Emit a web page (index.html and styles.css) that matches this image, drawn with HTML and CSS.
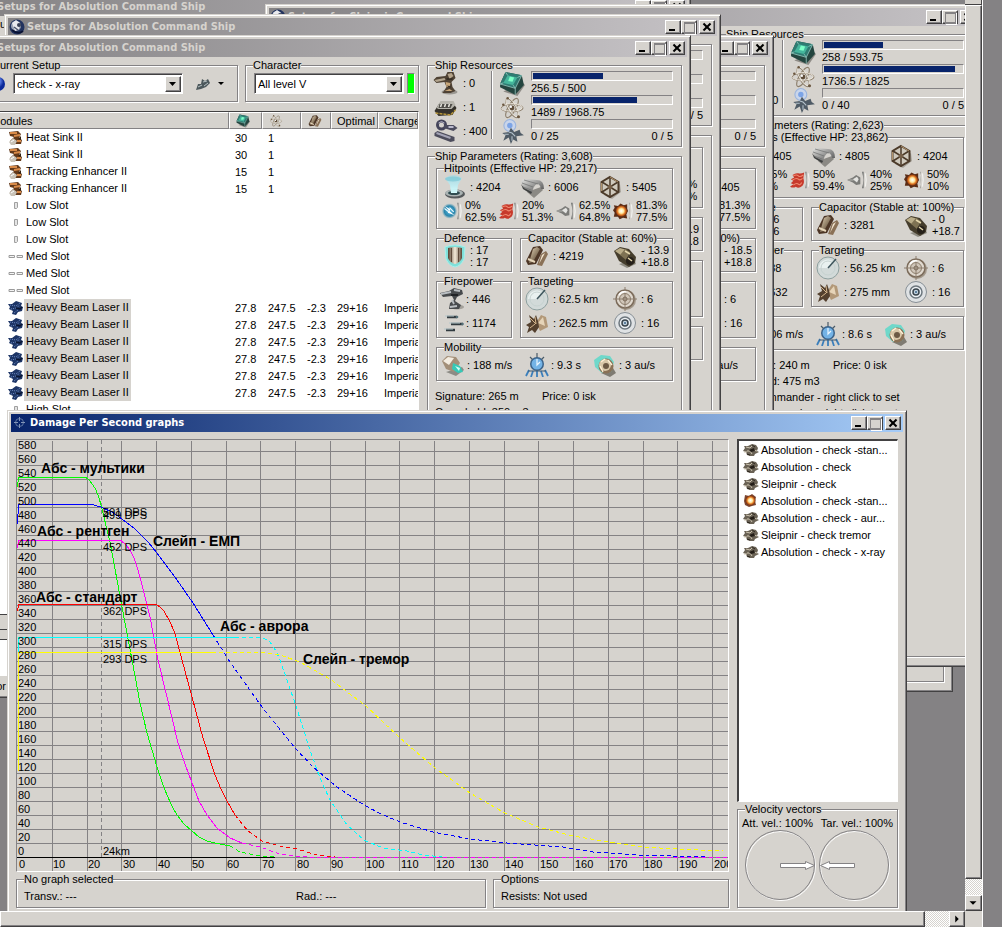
FILE: index.html
```html
<!DOCTYPE html>
<html lang="en">
<head>
    <meta charset="UTF-8">
    <meta name="viewport" content="width=device-width, initial-scale=1.0">
    <title>Damage Per Second graphs</title>
    <link rel="stylesheet" href="styles.css">
</head>
<body>
    <!-- Icon sprite -->
    <svg class="sprite" width="0" height="0" aria-hidden="true">
        <defs>
            <linearGradient id="gMetal" x1="0" y1="0" x2="1" y2="1"><stop offset="0" stop-color="#e4e4e2"/><stop offset="1" stop-color="#4a4a4a"/></linearGradient>
            <linearGradient id="gBronze" x1="0" y1="0" x2="1" y2="1"><stop offset="0" stop-color="#e9d9bc"/><stop offset="1" stop-color="#43301c"/></linearGradient>
            <linearGradient id="gPlate" x1="0" y1="0" x2="1" y2="0"><stop offset="0" stop-color="#54402f"/><stop offset=".5" stop-color="#f4ead8"/><stop offset="1" stop-color="#5b4636"/></linearGradient>
            <linearGradient id="gBeam" x1="0" y1="0" x2="0" y2="1"><stop offset="0" stop-color="#8fdcee" stop-opacity=".5"/><stop offset="1" stop-color="#d8ffff"/></linearGradient>
            <radialGradient id="gBlast"><stop offset="0" stop-color="#ffffff"/><stop offset=".4" stop-color="#ffe9a0"/><stop offset=".7" stop-color="#e07420"/><stop offset="1" stop-color="#6b2b10"/></radialGradient>
            <radialGradient id="gEm"><stop offset="0" stop-color="#58b8e0"/><stop offset=".7" stop-color="#2b86ac"/><stop offset="1" stop-color="#88b5c4" stop-opacity=".3"/></radialGradient>
            <radialGradient id="gBall" cx=".4" cy=".3"><stop offset="0" stop-color="#ffffff"/><stop offset=".4" stop-color="#6a8cf0"/><stop offset="1" stop-color="#0c2a9a"/></radialGradient>
        </defs>
        <symbol id="turret" viewBox="0 0 24 24">
            <ellipse cx="16" cy="21" rx="8" ry="2.500" fill="#9b9892"/>
            <path d="M0 9l3-3 9-1 2-4 6 0 2 6-4 4 1 5 3 4-5 2H9l4-6-2-5-8 1z" fill="#4f4234"/>
            <path d="M1 9l10-2 1 2-9 2z" fill="#b3a58e"/><path d="M14 3l4-1 2 3-4 3z" fill="#b5a48b"/>
            <path d="M12 11l5 1-1 4-3 0zM11 20l5-2 3 2z" fill="#c8a77a"/>
            <path d="M13 8l6 0M14 15l3 1" stroke="#201a14" fill="none"/>
        </symbol>
        <symbol id="launcher" viewBox="0 0 24 24">
            <path d="M1 16l5-8 13-1 4 6-4 7-14 1z" fill="#35322c"/>
            <path d="M3 13l4-7 13 0 2 4-4 4H5z" fill="#b7b5ad"/>
            <path d="M6 9h13l-2 4H5z" fill="#4f4d48"/>
            <path d="M8 9l-1 3M12 9l-1 3M16 9l-1 3" stroke="#e8e6df" stroke-width="1.500"/>
            <path d="M2 18l15 2 5-5" stroke="#b7963a" stroke-width="1.500" fill="none" stroke-dasharray="3 1"/>
        </symbol>
        <symbol id="calib" viewBox="0 0 24 24">
            <path d="M1 14l3-2 17 6v4l-4 1L1 17z" fill="#4d4d5c"/>
            <path d="M3 14l14 5" stroke="#a4a4b6" stroke-width="2"/>
            <circle cx="8" cy="6" r="4" fill="none" stroke="#45455a" stroke-width="3"/>
            <path d="M5 4q3-3 6 0" stroke="#a9a9bf" fill="none"/>
            <path d="M11 6l9 0 4 3-4 3-10-3z" fill="#4b4b5e"/><path d="M15 8h5" stroke="#b9b9cc" stroke-width="2"/>
        </symbol>
        <symbol id="cpu" viewBox="0 0 24 24">
            <path d="M4 19l13 4 7-10-3-3z" fill="#8f8c87"/>
            <path d="M6 1l15 3 2 9-8 9L1 15v-3z" fill="#24453f"/>
            <path d="M6 1l15 3-6 12L1 12z" fill="#2f7c72"/>
            <path d="M8 4l9 2-4 7-9-2z" fill="#45b59c"/>
            <path d="M10 5l4 1-1.500 4-4-.7z" fill="#7dffc7"/>
            <path d="M1 12l14 4 6-12M15 16v6M6 1l2 3M1 12l3-1M15 16l-2-3M21 4l-4 2" stroke="#9ccdc3" stroke-width=".7" fill="none"/>
        </symbol>
        <symbol id="grid" viewBox="0 0 24 24">
            <g fill="none" stroke="#8b7d6a" stroke-width="1"><ellipse cx="12" cy="12" rx="10" ry="3.500"/><ellipse cx="12" cy="12" rx="10" ry="3.500" transform="rotate(60 12 12)"/><ellipse cx="12" cy="12" rx="10" ry="3.500" transform="rotate(120 12 12)"/></g>
            <g fill="none" stroke="#f6f1e6" stroke-width=".7"><ellipse cx="11.500" cy="11.500" rx="10" ry="3.500"/><ellipse cx="11.500" cy="11.500" rx="10" ry="3.500" transform="rotate(60 12 12)"/></g>
            <circle cx="12" cy="12" r="2.200" fill="#5e4c38"/><circle cx="11" cy="11" r="1" fill="#fff"/>
            <circle cx="4" cy="9" r="1.200" fill="#6b5740"/><circle cx="18" cy="20" r="1.400" fill="#6b5740"/><circle cx="8" cy="3" r="1.200" fill="#6b5740"/>
        </symbol>
        <symbol id="drone" viewBox="0 0 24 24">
            <circle cx="10" cy="6" r="5.500" fill="#c9d5ea" stroke="#9ab4dd"/><circle cx="10" cy="6" r="2.500" fill="#7ca4e6"/>
            <path d="M3 13l6-1 2-4 3 4 5-2 1 3 3 2-7 1 1 5-4-2-2 4-2-6-5 3 2-5z" fill="#4f5b66"/>
            <path d="M9 12l3 1 3 3M5 14l4 0M12 16v4" stroke="#b4c2cc" stroke-width="1" fill="none"/>
        </symbol>
        <symbol id="shield" viewBox="0 0 24 24">
            <ellipse cx="13" cy="19" rx="10" ry="4.500" fill="#55595b"/>
            <ellipse cx="12" cy="18" rx="9" ry="3.500" fill="#aab3b3"/>
            <ellipse cx="12" cy="18" rx="6" ry="2" fill="#2f4c50"/>
            <path d="M3 3q9-6 17 0l-4 7-1 8H9L8 10z" fill="url(#gBeam)"/>
            <ellipse cx="11" cy="4" rx="8" ry="2.500" fill="#6fc4d6" opacity=".6"/>
        </symbol>
        <symbol id="armor" viewBox="0 0 24 24">
            <path d="M7 17l7 6 9-8-2-3z" fill="#8b8984"/>
            <path d="M1 7q1-3 4-3l12 1q7 0 7 9l-3 0q-1-5-4-5-4 2-5 9l-8-4z" fill="url(#gMetal)"/>
            <path d="M4 5l14 4M2 8l11 4M3 12l8 3" stroke="#6d6f6f" stroke-width=".7"/>
            <path d="M1 9l2 5 8 5 1-2-8-4z" fill="#3f4141"/>
        </symbol>
        <symbol id="hull" viewBox="0 0 24 24">
            <path d="M6 20l8 4 9-7-1-8z" fill="#a7a39b"/>
            <path d="M12 2l8.500 5v10L12 22l-8.500-5V7z" fill="#cfc9bd" stroke="#4c3a29" stroke-width="2"/>
            <path d="M12 3v18M4 7l16 10M20 7L4 17" stroke="#4a3928" stroke-width="1.500"/>
            <path d="M12 2l8 5M3.500 8v8" stroke="#c9a87c" stroke-width=".8"/><circle cx="12" cy="12" r="2.300" fill="#766049"/>
        </symbol>
        <symbol id="em" viewBox="0 0 24 24">
            <circle cx="9" cy="12" r="9" fill="url(#gEm)"/>
            <path d="M3 6l7 4-1 2 6 5-8-3 1-3z" fill="#fff"/><path d="M3 9l5 4M9 8l5 5" stroke="#e8faff" stroke-width="1.500"/>
            <path d="M18 2h2v20h-2q3-10 0-20z" fill="#8f908d"/><path d="M22 4q2 8 0 16" stroke="#f1f1ee" stroke-width="1.500" fill="none"/>
        </symbol>
        <symbol id="thermal" viewBox="0 0 24 24">
            <path d="M3 6q4-3 7-2 3 1 7-1l-1 7q2 5-1 9-5 4-8 1-3 2-7 0l4-3-3-1 3-3-3-2 4-2z" fill="#c73a2c"/>
            <path d="M4 7q4-2 6 0t6-1M3 12q5-3 7-1t5-1M4 18q4-3 6-1t4-2" stroke="#f08a70" stroke-width="1.300" fill="none"/>
            <path d="M18 2h2v20h-2q3-10 0-20z" fill="#8f908d"/><path d="M22 4q2 8 0 16" stroke="#f1f1ee" stroke-width="1.500" fill="none"/>
        </symbol>
        <symbol id="kinetic" viewBox="0 0 24 24">
            <path d="M0 12l7-3 4-3 5 3v8l-5 1-4-3z" fill="#7b7b78"/>
            <path d="M7 11l5-3 2 3-2 4z" fill="#e4e4e1"/><path d="M2 12h6" stroke="#bdbdb9"/>
            <path d="M18 2h2v20h-2q3-10 0-20z" fill="#6f716f"/><path d="M22 4q2 8 0 16" stroke="#f1f1ee" stroke-width="1.500" fill="none"/>
        </symbol>
        <symbol id="explosive" viewBox="0 0 24 24">
            <path d="M1 5l5 1 3-3 4 2 4-1v5l1 3-2 4 1 5-5-1-4 2-2-3-5 0 1-5-2-3 2-3z" fill="#5a2c16"/>
            <circle cx="10" cy="12" r="7" fill="url(#gBlast)"/>
            <path d="M19 2h1v20h-1q3-10 0-20z" fill="#8f908d"/><path d="M22 4q2 8 0 16" stroke="#f1f1ee" stroke-width="1.500" fill="none"/>
        </symbol>
        <symbol id="defence" viewBox="0 0 24 24">
            <path d="M2 3q10-4 20 0l-1 12q-3 7-9 8-6-1-9-8z" fill="#7fe0da" stroke="#a9efeb"/>
            <path d="M5 4q7-2 14 0v10q-2 5-7 6-5-1-7-6z" fill="url(#gPlate)"/>
            <path d="M8.500 4v14M15.500 4v14" stroke="#5e4a3a"/>
        </symbol>
        <symbol id="cap" viewBox="0 0 24 24">
            <path d="M8 3l7-1 3 4-7 14-8 1-2-4z" fill="#4d3626"/><path d="M8 5l4-2 3 2-7 13-4 1z" fill="url(#gBronze)"/>
            <path d="M16 10l5-3 2 3-6 12-5-1z" fill="#8a7157"/><path d="M17 11l3-2-6 11z" fill="#f2e5cf"/>
            <path d="M3 15l7 3" stroke="#e7d7bb" stroke-width="2"/>
        </symbol>
        <symbol id="recharge" viewBox="0 0 24 24">
            <path d="M6 20l8 4 9-4-2-4z" fill="#8f8c82"/>
            <path d="M1 7l6-4 9 2 7 8-1 6-6 4-10-6z" fill="#453d2c"/><path d="M2 7l5-3 7 2-5 6z" fill="#b9ac88"/>
            <path d="M7 11l5-6 5 3-4 8z" fill="#7e7253"/><circle cx="17" cy="17" r="4" fill="#262019"/><path d="M12 7l5 3M15 14l4 3" stroke="#e4d6ac" stroke-width="1.500"/>
        </symbol>
        <symbol id="gun" viewBox="0 0 24 24">
            <ellipse cx="17" cy="20" rx="7" ry="2.500" fill="#a3a09a"/>
            <path d="M0 6l9-2 5-3 8 2 1 4-6 3-2 4 6 4-2 4-10 0 1-6 4-3-2-4-9 1z" fill="#474a4d"/>
            <path d="M1 7l10-2M14 3l6 1M12 13l2 4M10 20l7-1" stroke="#b9bec2" stroke-width="1.800"/><path d="M11 8l7 0" stroke="#15171a" stroke-width="1.500"/>
        </symbol>
        <symbol id="volley" viewBox="0 0 24 24">
            <path d="M7 6h10M11 13h12M6 19h9" stroke="#313a3f" stroke-width="2.400"/>
            <path d="M5 5h9M9 12h11M4 18h9" stroke="#b4c6ca" stroke-width="1"/><circle cx="17" cy="6" r="1.300" fill="#557078"/><circle cx="22.500" cy="13" r="1.300" fill="#557078"/>
        </symbol>
        <symbol id="radar" viewBox="0 0 24 24">
            <circle cx="12" cy="12" r="11" fill="#d2dad9" stroke="#8ea09f" stroke-width="1"/>
            <path d="M3 12a9 9 0 0 1 14-7L12 12z" fill="#e9f1f0"/><circle cx="12" cy="12" r="7" fill="none" stroke="#c6d2d0"/>
            <path d="M12 12l8-9" stroke="#3e555c" stroke-width="1.500"/>
        </symbol>
        <symbol id="locks" viewBox="0 0 24 24">
            <circle cx="13" cy="13" r="10" fill="#a59b8e"/><circle cx="12" cy="12" r="9" fill="#e0d9cf" stroke="#7c6c5b" stroke-width="1.500"/>
            <circle cx="12" cy="12" r="5.500" fill="#cfc5b8" stroke="#8b7c6b"/><path d="M12 0v24M0 12h24" stroke="#8d7e6e"/><circle cx="12" cy="12" r="2" fill="none" stroke="#7a6a59"/>
            <path d="M6 8a7 7 0 0 1 7-3" stroke="#fff" stroke-width="1.500" fill="none"/>
        </symbol>
        <symbol id="dish" viewBox="0 0 24 24">
            <path d="M11 12l5-8 5 2 2 10-8 4z" fill="#b29878"/><path d="M13 12l5-6 2 9z" fill="#e6d4b8"/>
            <path d="M4 4l5 4 2-4 2 6 1 6-4 6-3-3-5 3 2-6-3-2 5-3z" fill="#54402e"/>
            <path d="M5 7l6 6M5 17l5-4M10 6l1 7" stroke="#d5b68d" stroke-width="1"/>
        </symbol>
        <symbol id="scan" viewBox="0 0 24 24">
            <circle cx="12" cy="12" r="10.500" fill="#dfe2e4" stroke="#878f95"/><circle cx="12" cy="12" r="6" fill="#edf1f4" stroke="#6d777e" stroke-width="1.500"/>
            <circle cx="12" cy="12" r="3" fill="#c2d2de" stroke="#39444c" stroke-width="1.500"/><circle cx="12" cy="12" r="1" fill="#3d6688"/>
        </symbol>
        <symbol id="speed" viewBox="0 0 24 24">
            <path d="M5 19l10 4 8-6-2-3z" fill="#8d8b85"/>
            <path d="M1 8l5-5 9 1 4 6-6 9-8-3z" fill="#a38f78"/><path d="M2 8l5-4 6 1-5 7z" fill="#f3ece0"/>
            <path d="M12 10l7 3 3 6-5 1-6-4z" fill="#36c9b7"/><path d="M14 13l5 2-1 3z" fill="#d1fff6"/>
        </symbol>
        <symbol id="align" viewBox="0 0 24 24">
            <path d="M12 0v5M5 4l3 3M19 4l-3 3" stroke="#4b5b68" stroke-width="1.200"/>
            <circle cx="12" cy="11" r="7" fill="#3c6389"/><circle cx="12" cy="11" r="5.500" fill="#74b3e6"/><path d="M12 6v6l3-3" stroke="#eaf6ff" stroke-width="1.200" fill="none"/>
            <path d="M4 17l-3 6M8 18l-2 6M12 18v6M16 18l2 6M20 17l3 6" stroke="#3b7fbc" stroke-width="1.800"/><path d="M3 18h18" stroke="#3f5a72"/>
        </symbol>
        <symbol id="warp" viewBox="0 0 24 24">
            <path d="M8 20l9 4 6-4-3-5z" fill="#7f7b72"/>
            <path d="M1 7l7-5 9 1 4 6-3 10-9 1-7-6z" fill="#6fd8ca"/><circle cx="13" cy="13" r="7.500" fill="#8a7156"/><circle cx="12" cy="12" r="6" fill="#d9c7a8"/>
            <circle cx="13" cy="13" r="3" fill="#6d5a45"/><path d="M8 9l4-3M7 13l3 6M15 7l4 5" stroke="#fff1d7" stroke-width="1.300"/>
        </symbol>
        <symbol id="lowmod" viewBox="0 0 16 16">
            <path d="M1 2l9-1 3 3-2 4 3 2-1 4-8 0-3-3 4-4-4-1z" fill="#63391a"/><path d="M2 3l7 0M6 6l6-1M9 11l4 0" stroke="#d88a48" stroke-width="2"/>
            <path d="M1 12l4-4 4 3-2 4H3z" fill="#c9c3b8"/><path d="M3 12l3-2" stroke="#fff"/><path d="M10 9l3-3v4z" fill="#33200f"/>
        </symbol>
        <symbol id="lowslot" viewBox="0 0 16 16"><path d="M6.500 4.500h3v5l-1 1h-2z" fill="#e4e4e4" stroke="#a0a0a0"/></symbol>
        <symbol id="medslot" viewBox="0 0 16 16"><path d="M1 6.500h5.500v2H1zM9 6.500h5.500v2H9z" fill="#f4f4f4" stroke="#9a9a9a"/></symbol>
        <symbol id="laser" viewBox="0 0 16 16">
            <path d="M0 4l4 0 4-3 6 2-1 3 2 1-1 4-4 1-2 3-4-1 1-3-4-2 1-2z" fill="#1d3566"/>
            <path d="M2 5l6 1 4-3M3 9l5-1 4-3M6 13l4-3" stroke="#6e8cc4" stroke-width="1" stroke-dasharray="1 1" fill="none"/><path d="M8 8l4 1 2-2" stroke="#0a1530" stroke-width="1.500" fill="none"/>
        </symbol>
        <symbol id="fit" viewBox="0 0 16 16">
            <path d="M1 4l4 0 4-2 4 1 2 3-1 3 2 1-4 2-1 2-4 0-3-1-1-3-3-1 2-3z" fill="#6a6255"/>
            <path d="M3 5l4 1 3-3M4 9l3 0 2 3M10 8l4 1M1 10h3" stroke="#cfc6b2" fill="none"/><path d="M6 8l5-2 1 3-4 1z" fill="#241e18"/><path d="M9 3l3 2M4 12l3 1" stroke="#2b251d"/>
        </symbol>
        <symbol id="blast" viewBox="0 0 16 16"><path d="M2 2l4 1 3-2 4 3-1 4 1 4-4 1-3 1-4-2-1-4z" fill="#7c4630"/><circle cx="7.500" cy="7.500" r="5" fill="url(#gBlast)"/></symbol>
        <symbol id="ship" viewBox="0 0 16 16"><circle cx="8" cy="8" r="7.500" fill="#22335f"/><circle cx="7" cy="7" r="5" fill="#9aa3b5"/><path d="M3 4l4-3 4 3-1 6-4 2z" fill="#e9eaee"/><path d="M3 11q6 5 11 1" stroke="#0a1233" stroke-width="2" fill="none"/><path d="M5 8l4 3" stroke="#4c546b" stroke-width="1.500"/><circle cx="10" cy="6" r="2" fill="#383f55"/></symbol>
        <symbol id="cross" viewBox="0 0 16 16"><circle cx="7.500" cy="7.500" r="4" fill="none" stroke="#5f76a2"/><path d="M7.500 2v4M7.500 9v4M2 7.500h4M9 7.500h4" stroke="#8194b8"/></symbol>
        <symbol id="pod" viewBox="0 0 16 16"><path d="M1 14l2-6 3 0 1-5 3 2 3-2 2 4-4 4-5 2z" fill="#4d585c"/><path d="M3 11l4-2M8 6l4-1M9 10l4-3" stroke="#b5c0c2"/></symbol>
        <symbol id="ball" viewBox="0 0 16 16"><circle cx="8" cy="8" r="7" fill="url(#gBall)"/></symbol>
        <symbol id="tick" viewBox="0 0 8 8"><path d="M0 4l3 3 4-6" stroke="#6cc03c" stroke-width="2" fill="none"/></symbol>
    </svg>

    <div class="desktop">
        <main class="workspace" id="workspace">
            <!-- DPS graph window -->
            <section class="window graph-window">
                <header class="titlebar active">
                    <svg class="title-icon"><use href="#cross"/></svg>
                    <h1>Damage Per Second graphs</h1>
                    <div class="title-buttons">
                        <button class="tb min" aria-label="Minimize"></button><button class="tb max" aria-label="Maximize"></button><button class="tb close" aria-label="Close"></button>
                    </div>
                </header>
                <div class="graph-body">
                    <div class="graph-left">
                        <div class="graph-panel"><svg id="graph" class="graph" viewBox="17 440 711 431"></svg></div>
                        <div class="graph-info">
                            <fieldset class="selected-info">
                                <legend>No graph selected</legend>
                                <div class="info-line"><span>Transv.: ---</span><span>Rad.: ---</span></div>
                            </fieldset>
                            <fieldset class="options-info">
                                <legend>Options</legend>
                                <div class="info-line"><span>Resists: Not used</span></div>
                            </fieldset>
                        </div>
                    </div>
                    <div class="graph-right">
                        <ul class="fit-list">
                            <li><svg><use href="#fit"/></svg>Absolution - check -stan...</li>
                            <li><svg><use href="#fit"/></svg>Absolution - check</li>
                            <li><svg><use href="#fit"/></svg>Sleipnir - check</li>
                            <li><svg><use href="#blast"/></svg>Absolution - check -stan...</li>
                            <li><svg><use href="#fit"/></svg>Absolution - check - aur...</li>
                            <li><svg><use href="#fit"/></svg>Sleipnir - check tremor</li>
                            <li><svg><use href="#fit"/></svg>Absolution - check - x-ray</li>
                        </ul>
                        <fieldset class="velocity">
                            <legend>Velocity vectors</legend>
                            <div class="velocity-labels"><span>Att. vel.: 100%</span><span>Tar. vel.: 100%</span></div>
                            <svg class="vectors" viewBox="0 0 148 72">
                                <g fill="none" stroke="#fff"><circle cx="37" cy="36" r="34.500"/><circle cx="111" cy="36" r="34.500"/></g>
                                <g fill="none" stroke="#848284"><circle cx="36" cy="35" r="34.500"/><circle cx="110" cy="35" r="34.500"/></g>
                                <path d="M36.500 33.500h25v-2l9 4-9 4v-2h-25zM110.500 33.500h-25v-2l-9 4 9 4v-2h25z" fill="#fff" stroke="#848284"/>
                            </svg>
                        </fieldset>
                    </div>
                </div>
            </section>
        </main>
        <div class="vscroll">
            <div class="scroll-up"></div>
            <div class="thumb"></div>
            <div class="track"></div>
            <button class="scroll-button" aria-label="Scroll down"><svg viewBox="0 0 16 16"><path d="M4 6h8l-4 4z"/></svg></button>
        </div>
        <div class="outside"></div>
        <div class="hscroll">
            <div class="thumb"></div>
            <div class="track"></div>
            <button class="scroll-button" aria-label="Scroll right"><svg viewBox="0 0 16 16"><path d="M6 4v8l4-4z"/></svg></button>
        </div>
        <div class="corner"></div>
    </div>

    <script src="script.js"></script>
</body>
</html>
```

FILE: styles.css
```css
/* Global Styles */
* {
    box-sizing: border-box;
}

body {
    margin: 0;
    font-family: 'Liberation Sans', Arial, sans-serif;
    font-size: 11px;
    line-height: 12px;
    color: #000000;
    background-color: #848284;
}

button, select {
    font: inherit;
    color: inherit;
}

h1, h2 {
    margin: 0;
}

svg {
    display: block;
}

.sprite {
    position: absolute;
}

/* Desktop */
.desktop {
    display: grid;
    grid-template-columns: 1fr 17px 20px;
    grid-template-rows: 1fr 16px;
    height: 100vh;
}

.workspace {
    position: relative;
    overflow: hidden;
    background-color: #848284;
}

.outside {
    grid-row: 1 / 3;
    grid-column: 3;
    border-left: 1px solid #ffffff;
    background-color: #848284;
}

.corner {
    background-color: #d6d3ce;
}

/* Scrollbars */
.vscroll, .hscroll {
    display: flex;
    background-color: #d6d3ce;
}

.vscroll {
    flex-direction: column;
}

.scroll-up {
    height: 5px;
    border-bottom: 1px solid #424142;
    border-right: 1px solid #424142;
}

.thumb {
    flex: 1;
    border: 1px solid #ffffff;
    border-right-color: #424142;
    border-bottom-color: #424142;
    box-shadow: inset -1px -1px 0 #848284;
}

.track {
    flex: 0 0 16px;
    background: repeating-conic-gradient(#ffffff 0 25%, #d6d3ce 0 50%) 0 0 / 2px 2px;
}

.hscroll .track {
    flex-basis: 24px;
}

.scroll-button {
    flex: 0 0 16px;
    padding: 0;
    background-color: #d6d3ce;
    border: 1px solid #ffffff;
    border-right-color: #424142;
    border-bottom-color: #424142;
    box-shadow: inset -1px -1px 0 #848284;
}

.scroll-button svg {
    width: 14px;
    height: 14px;
}

/* Windows */
.window {
    position: absolute;
    display: flex;
    flex-direction: column;
    padding: 3px;
    background-color: #d6d3ce;
    border: 1px solid #d6d3ce;
    border-right-color: #424142;
    border-bottom-color: #424142;
    box-shadow: inset 1px 1px 0 #ffffff, inset -1px -1px 0 #848284;
}

.titlebar {
    flex: 0 0 18px;
    display: flex;
    align-items: center;
    gap: 2px;
    padding: 0 2px 0 1px;
    background: linear-gradient(to right, #848284, #c6c3c6);
    color: #d6d3ce;
}

.titlebar.active {
    background: linear-gradient(to right, #08246b, #a5cbf7);
    color: #ffffff;
}

.titlebar h1, .titlebar h2 {
    flex: 1;
    font-family: 'DejaVu Sans Condensed', 'DejaVu Sans', sans-serif;
    font-size: 11px;
    font-weight: bold;
    line-height: 18px;
    white-space: nowrap;
}

.title-icon {
    width: 16px;
    height: 16px;
}

.title-buttons {
    display: flex;
}

.tb {
    position: relative;
    width: 16px;
    height: 14px;
    padding: 0;
    background-color: #d6d3ce;
    border: 1px solid #ffffff;
    border-right-color: #424142;
    border-bottom-color: #424142;
    box-shadow: inset -1px -1px 0 #848284;
}

.tb.close {
    margin-left: 2px;
}

.tb.min::before {
    content: '';
    position: absolute;
    left: 3px;
    bottom: 2px;
    width: 6px;
    height: 2px;
    background-color: #000000;
}

.tb.max::before {
    content: '';
    position: absolute;
    left: 2px;
    top: 1px;
    width: 9px;
    height: 9px;
    border: 1px solid #848284;
    border-top-width: 2px;
    box-shadow: 1px 1px 0 #ffffff;
}

.tb.close::before, .tb.close::after {
    content: '';
    position: absolute;
    left: 2px;
    top: 5px;
    width: 10px;
    height: 2px;
    background-color: #000000;
    transform: rotate(45deg);
}

.tb.close::after {
    transform: rotate(-45deg);
}

/* Group boxes */
fieldset {
    min-width: 0;
    margin: 0;
    padding: 0;
    border: 1px solid #848284;
    box-shadow: 1px 1px 0 #ffffff, inset 1px 1px 0 #ffffff;
}

legend {
    margin-left: 7px;
    padding: 0;
    line-height: 11px;
    background-color: #d6d3ce;
    white-space: nowrap;
}

/* Ship setup windows */
.ship-window {
    width: 717px;
    height: 663px;
}

.front-window { left: -26px; top: 35px; }
.second-window { left: 4px; top: 14px; }
.third-window { left: 57px; top: 35px; }
.sleipnir-window { left: 265px; top: 4px; }
.top-window { left: -26px; top: -6px; }
.back-window { left: 236px; top: 29px; }

.setup-body {
    flex: 1;
    min-height: 0;
    display: flex;
    gap: 8px;
    padding: 3px 5px 2px 6px;
}

.setup-left {
    flex: 1;
    min-width: 0;
    display: flex;
    flex-direction: column;
}

.selectors {
    display: flex;
    gap: 7px;
    height: 42px;
}

.current-setup {
    flex: 1;
}

.character {
    flex: 0 0 174px;
}

.selector-row {
    display: flex;
    align-items: center;
    gap: 6px;
    padding: 2px 3px 0 8px;
}

.current-setup .selector-row {
    padding-left: 5px;
}

.combo {
    flex: 1;
    min-width: 0;
    display: flex;
    height: 21px;
    background-color: #ffffff;
    border: 1px solid #848284;
    border-right-color: #ffffff;
    border-bottom-color: #ffffff;
    box-shadow: inset 1px 1px 0 #424142;
    padding: 2px 1px 1px 2px;
}

.current-setup .combo {
    flex: 0 0 170px;
    margin-left: 1px;
}

.combo select {
    flex: 1;
    min-width: 0;
    appearance: none;
    border: none;
    padding: 0 1px;
    background-color: #ffffff;
}

.combo-arrow {
    width: 16px;
    border: 1px solid #ffffff;
    border-right-color: #424142;
    border-bottom-color: #424142;
    background-color: #d6d3ce;
    box-shadow: inset -1px -1px 0 #848284;
}

.combo-arrow svg {
    width: 14px;
    height: 14px;
}

.ball {
    width: 16px;
    height: 16px;
}

.pod-button {
    display: flex;
    align-items: center;
    gap: 7px;
    margin-left: 6px;
    padding: 0;
    border: none;
    background: none;
}

.pod-button svg {
    width: 16px;
    height: 16px;
}

.pod-button .caret {
    width: 6px;
    height: 4px;
}

.level-bar {
    width: 8px;
    height: 21px;
    margin-left: -3px;
    background-color: #00ff00;
    border: 1px solid #848284;
    border-right-color: #ffffff;
    border-bottom-color: #ffffff;
}

.module-list {
    flex: 1;
    min-height: 0;
    margin-top: 9px;
    overflow: hidden;
    background-color: #ffffff;
    border: 1px solid #848284;
    border-top-color: #424142;
    border-right-color: #ffffff;
    border-bottom-color: #ffffff;
}

.modules {
    width: 100%;
    table-layout: fixed;
    border-collapse: separate;
    border-spacing: 0;
}

.modules th {
    height: 17px;
    padding: 0 0 0 5px;
    background-color: #d6d3ce;
    border: 1px solid #ffffff;
    border-right-color: #848284;
    border-bottom-color: #848284;
    font-weight: normal;
    text-align: left;
    white-space: nowrap;
    overflow: hidden;
}

.modules th svg {
    width: 16px;
    height: 14px;
}

.modules td {
    height: 17px;
    padding: 0 0 0 6px;
    white-space: nowrap;
    overflow: hidden;
}

.col-name { width: 244px; }
.col-cpu { width: 33px; }
.col-grid { width: 39px; }
.col-cap { width: 30px; }
.col-optimal { width: 47px; }

.module-name {
    display: flex;
    align-items: center;
    height: 17px;
}

.module-name .tick {
    width: 8px;
    height: 8px;
    margin-right: 9px;
    align-self: flex-start;
}

.module-name .no-tick {
    width: 17px;
}

.module-name .module-icon {
    width: 16px;
    height: 16px;
}

.module-name span {
    padding: 0 2px;
    line-height: 17px;
}

.module-name .selected {
    background-color: #d6d3ce;
}

.list-scroll {
    height: 16px;
    border: 1px solid #424142;
    background-color: #d6d3ce;
}

.notes {
    height: 37px;
    margin-top: 9px;
    background-color: #ffffff;
    border: 1px solid #424142;
    border-right-color: #ffffff;
    border-bottom-color: #ffffff;
}

.status {
    margin: 4px 0 0;
    width: 22px;
    text-align: right;
}

/* Ship stats */
.setup-right {
    flex: 0 0 255px;
    min-width: 0;
    display: flex;
    flex-direction: column;
    gap: 4px;
    padding-bottom: 4px;
}

.resources {
    height: 87px;
}

.resource-row {
    display: flex;
    padding: 0 8px 0 3px;
}

.slots {
    flex: 0 0 61px;
    height: 68px;
    border-right: 1px solid #848284;
    box-shadow: 1px 0 0 #ffffff;
}

.stat {
    display: flex;
    align-items: center;
    gap: 3px;
    height: 24px;
    white-space: nowrap;
}

.stat svg {
    flex: none;
    width: 26px;
    height: 24px;
}

.slots .stat svg {
    width: 29px;
}

.bars {
    flex: 1;
    padding-left: 6px;
}

.bar-row {
    display: flex;
    gap: 5px;
    height: 24px;
}

.bar-row svg {
    flex: none;
    width: 28px;
    height: 26px;
}

.bar-info {
    flex: 1;
}

.bar {
    height: 10px;
    padding: 1px;
    border: 1px solid #848284;
    border-right-color: #ffffff;
    border-bottom-color: #ffffff;
}

.bar-fill {
    height: 6px;
    background-color: #08246b;
}

.bar-text {
    display: flex;
    justify-content: space-between;
    line-height: 14px;
}

.parameters {
    flex: 1;
    min-height: 0;
}

.parameter-groups {
    display: flex;
    flex-direction: column;
    gap: 4px;
    padding: 1px 8px 0;
}

.group-row {
    display: flex;
    gap: 8px;
}

.narrow {
    flex: 0 0 76px;
}

.wide {
    flex: 1;
}

.hitpoints {
    height: 66px;
    padding: 0 0 0 4px;
}

.hitpoints legend {
    margin-left: 3px;
}

.hp-row {
    display: grid;
    grid-template-columns: 78px 78px 1fr;
    padding-top: 1px;
}

.resist-row {
    display: grid;
    grid-template-columns: 57px 57px 57px 1fr;
}

.resist {
    display: flex;
    align-items: center;
    gap: 2px;
}

.resist svg {
    width: 22px;
    height: 20px;
}

.small-group {
    height: 39px;
}

.tall-group {
    height: 62px;
}

.narrow .stat {
    padding-left: 2px;
    gap: 1px;
}

.pair {
    display: grid;
    grid-template-columns: 88px 1fr;
    padding-left: 3px;
}

.mobility-row {
    display: grid;
    grid-template-columns: 84px 68px 1fr;
    padding: 0 0 0 3px;
}

.mobility-row .stat {
    gap: 1px;
}

.defence .stat {
    padding-left: 5px;
    gap: 2px;
}

.ship-notes {
    padding: 7px 7px 0;
    line-height: 16px;
    white-space: nowrap;
}

.ship-notes span {
    display: inline-block;
    min-width: 107px;
}

/* Graph window */
.graph-window {
    left: 7px;
    top: 410px;
    width: 900px;
    height: 505px;
    z-index: 2;
}

.graph-body {
    flex: 1;
    display: flex;
    align-items: flex-start;
    gap: 8px;
    padding: 7px 5px 0;
}

.graph-left {
    flex: 1;
    min-width: 0;
}

.graph-panel {
    border: 1px solid #848284;
    border-right-color: #ffffff;
    border-bottom-color: #ffffff;
}

.graph {
    width: 100%;
    height: auto;
}

.graph-info {
    display: flex;
    gap: 7px;
    margin-top: 2px;
}

.graph-info fieldset {
    height: 34px;
}

.selected-info {
    flex: 2;
}

.options-info {
    flex: 1;
}

.info-line {
    display: grid;
    grid-template-columns: 272px 1fr;
    padding: 5px 7px 0;
}

.options-info .info-line {
    display: block;
}

.graph-right {
    flex: 0 0 161px;
}

.fit-list {
    height: 363px;
    margin: 0 0 2px;
    padding: 0;
    list-style: none;
    background-color: #ffffff;
    border: 2px solid #848284;
    border-top-color: #424142;
    border-left-color: #424142;
    border-right: 1px solid #ffffff;
    border-bottom: 1px solid #ffffff;
}

.fit-list li {
    display: flex;
    align-items: center;
    gap: 2px;
    height: 17px;
    padding-left: 4px;
    white-space: nowrap;
}

.fit-list svg {
    width: 16px;
    height: 16px;
}

.velocity {
    height: 104px;
}

.velocity-labels {
    display: flex;
    justify-content: space-between;
    padding: 2px 4px 0;
    line-height: 13px;
    white-space: nowrap;
}

.vectors {
    width: 148px;
    height: 72px;
    margin-left: 6px;
}

.graph text {
    font-size: 11px;
}

.graph .caption {
    font-size: 14px;
    font-weight: bold;
}
```

FILE: script.js
```js
const absolution = {
    title: 'Setups for Absolution Command Ship',
    setup: 'check - x-ray',
    launchers: 1, cpu: '256.5 / 500', cpuFill: 51, grid: '1489 / 1968.75', gridFill: 75, drones: '0 / 25',
    rating: '3,608', ehp: '29,217', hp: [4204, 6006, 5405],
    resists: [['0%', '62.5%'], ['20%', '51.3%'], ['62.5%', '64.8%'], ['81.3%', '77.5%']],
    defence: [17, 17], stable: '60%', cap: 4219, drain: '- 13.9', gain: '+18.8',
    dps: 446, volley: 1174, range: '62.5 km', locks: 6, scan: '262.5 mm', sensor: 16,
    speed: '188 m/s', align: '9.3 s', warp: '3 au/s', signature: '265 m', cargo: '350 m3'
};

const sleipnir = {
    title: 'Setups for Sleipnir Command Ship',
    setup: 'check',
    launchers: 1, cpu: '258 / 593.75', cpuFill: 43, grid: '1736.5 / 1825', gridFill: 95, drones: '0 / 40',
    rating: '2,623', ehp: '23,862', hp: [5405, 4805, 4204],
    resists: [['62.5%', '60%'], ['50%', '59.4%'], ['40%', '25%'], ['50%', '10%']],
    defence: [16, 16], stable: '100%', cap: 3281, drain: '- 0', gain: '+18.7',
    dps: 388, volley: 1632, range: '56.25 km', locks: 6, scan: '275 mm', sensor: 16,
    speed: '206 m/s', align: '8.6 s', warp: '3 au/s', signature: '240 m', cargo: '475 m3'
};

// Back to front: class, ship, panes to fill in (the covered ones are left empty)
const windows = [
    ['back-window', absolution, ''],
    ['top-window', absolution, 'title selectors'],
    ['sleipnir-window', sleipnir, 'title stats'],
    ['third-window', { ...absolution, drain: '- 18.5' }, 'stats'],
    ['second-window', absolution, 'title stats'],
    ['front-window', absolution, 'title selectors modules stats']
];

const modules = [
    ['lowmod', 'Heat Sink II', 30, 1],
    ['lowmod', 'Heat Sink II', 30, 1],
    ['lowmod', 'Tracking Enhancer II', 15, 1],
    ['lowmod', 'Tracking Enhancer II', 15, 1],
    ['lowslot', 'Low Slot'],
    ['lowslot', 'Low Slot'],
    ['lowslot', 'Low Slot'],
    ['medslot', 'Med Slot'],
    ['medslot', 'Med Slot'],
    ['medslot', 'Med Slot'],
    ...Array(6).fill(['laser', 'Heavy Beam Laser II', 27.8, 247.5, -2.3, '29+16', 'Imperial']),
    ['lowslot', 'High Slot']
];

const icon = (name, cls = '') => `<svg class="${cls}"><use href="#${name}"/></svg>`;
const stat = (name, text) => `<div class="stat">${icon(name)}<span>${text}</span></div>`;
const arrow = '<span class="combo-arrow"><svg viewBox="0 0 14 14"><path d="M3 5h7l-3.500 4z"/></svg></span>';

function moduleRow([type, name, ...values]) {
    const laser = type === 'laser';
    const cells = [0, 1, 2, 3, 4].map(i => `<td>${values[i] ?? ''}</td>`).join('');
    return `<tr><td><div class="module-name">
        ${laser ? icon('tick', 'tick') : '<i class="no-tick"></i>'}${icon(type, 'module-icon')}
        <span class="${laser ? 'selected' : ''}">${name}</span></div></td>${cells}</tr>`;
}

function barRow(name, fill, left, right) {
    return `<div class="bar-row">${icon(name)}<div class="bar-info">
        <div class="bar"><div class="bar-fill" style="width: ${fill}%"></div></div>
        <div class="bar-text"><span>${left}</span><span>${right}</span></div></div></div>`;
}

function selectorsPane(s) {
    return `
        <div class="selectors">
            <fieldset class="current-setup">
                <legend>Current Setup</legend>
                <div class="selector-row">
                    ${icon('ball', 'ball')}
                    <div class="combo"><select aria-label="Current Setup"><option>${s.setup}</option></select>${arrow}</div>
                    <button class="pod-button" aria-label="Ship menu">${icon('pod')}<svg class="caret" viewBox="0 0 6 4"><path d="M0 0h6l-3 3z"/></svg></button>
                </div>
            </fieldset>
            <fieldset class="character">
                <legend>Character</legend>
                <div class="selector-row">
                    <div class="combo"><select aria-label="Character"><option>All level V</option></select>${arrow}</div>
                    <div class="level-bar"></div>
                </div>
            </fieldset>
        </div>`;
}

function modulesPane() {
    return `
        <div class="module-list">
            <table class="modules">
                <thead><tr><th class="col-name">Modules</th><th class="col-cpu">${icon('cpu')}</th><th class="col-grid">${icon('grid')}</th><th class="col-cap">${icon('cap')}</th><th class="col-optimal">Optimal</th><th>Charge</th></tr></thead>
                <tbody>${modules.map(moduleRow).join('')}</tbody>
            </table>
        </div>
        <div class="list-scroll"></div>
        <div class="notes"></div>
        <p class="status">For</p>`;
}

function statsPane(s) {
    return `
        <fieldset class="resources">
            <legend>Ship Resources</legend>
            <div class="resource-row">
                <div class="slots">${stat('turret', ': 0')}${stat('launcher', ': ' + s.launchers)}${stat('calib', ': 400')}</div>
                <div class="bars">
                    ${barRow('cpu', s.cpuFill, s.cpu, '')}
                    ${barRow('grid', s.gridFill, s.grid, '')}
                    ${barRow('drone', 0, s.drones, '0 / 5')}
                </div>
            </div>
        </fieldset>
        <fieldset class="parameters">
            <legend>Ship Parameters (Rating: ${s.rating})</legend>
            <div class="parameter-groups">
                <fieldset class="hitpoints">
                    <legend>Hitpoints (Effective HP: ${s.ehp})</legend>
                    <div class="hp-row">${stat('shield', ': ' + s.hp[0])}${stat('armor', ': ' + s.hp[1])}${stat('hull', ': ' + s.hp[2])}</div>
                    <div class="resist-row">${['em', 'thermal', 'kinetic', 'explosive'].map((name, i) =>
                        `<div class="resist">${icon(name)}<div>${s.resists[i].join('<br>')}</div></div>`).join('')}</div>
                </fieldset>
                <div class="group-row">
                    <fieldset class="narrow small-group defence">
                        <legend>Defence</legend>
                        ${stat('defence', `: ${s.defence[0]}<br>: ${s.defence[1]}`)}
                    </fieldset>
                    <fieldset class="wide small-group">
                        <legend>Capacitor (Stable at: ${s.stable})</legend>
                        <div class="pair">${stat('cap', ': ' + s.cap)}${stat('recharge', s.drain + '<br>' + s.gain)}</div>
                    </fieldset>
                </div>
                <div class="group-row">
                    <fieldset class="narrow tall-group">
                        <legend>Firepower</legend>
                        ${stat('gun', ': ' + s.dps)}${stat('volley', ': ' + s.volley)}
                    </fieldset>
                    <fieldset class="wide tall-group">
                        <legend>Targeting</legend>
                        <div class="pair">${stat('radar', ': ' + s.range)}${stat('locks', ': ' + s.locks)}${stat('dish', ': ' + s.scan)}${stat('scan', ': ' + s.sensor)}</div>
                    </fieldset>
                </div>
                <fieldset class="small-group">
                    <legend>Mobility</legend>
                    <div class="mobility-row">${stat('speed', ': ' + s.speed)}${stat('align', ': ' + s.align)}${stat('warp', ': ' + s.warp)}</div>
                </fieldset>
            </div>
            <div class="ship-notes">
                <div><span>Signature: ${s.signature}</span>Price: 0 isk</div>
                <div>Cargohold: ${s.cargo}</div>
                <div>Gang commander - right click to set</div>
                <div>Wing commander - right click to set</div>
            </div>
        </fieldset>`;
}

function shipWindow([cls, s, panes]) {
    const section = document.createElement('section');
    section.className = `window ship-window ${cls}`;
    section.innerHTML = `
        <header class="titlebar">
            ${icon('ship', 'title-icon')}<h2>${panes.includes('title') ? s.title : ''}</h2>
            <div class="title-buttons"><button class="tb min" aria-label="Minimize"></button><button class="tb max" aria-label="Maximize"></button><button class="tb close" aria-label="Close"></button></div>
        </header>
        <div class="setup-body">
            <div class="setup-left">
                ${panes.includes('selectors') ? selectorsPane(s) : ''}
                ${panes.includes('modules') ? modulesPane() : ''}
            </div>
            <div class="setup-right">
                ${panes.includes('stats') ? statsPane(s) : '<fieldset class="parameters"></fieldset>'}
            </div>
        </div>`;
    return section;
}

const workspace = document.getElementById('workspace');
const graphWindow = workspace.querySelector('.graph-window');
windows.forEach(w => workspace.insertBefore(shipWindow(w), graphWindow));

// DPS curves: colour, solid part, dashed part
const curves = [
    ['#00ff00', '17.5,487 18.5,477.5 86,477.5 90,481 93,485 96,490 99,498 101,505 110,542 122,607 133,665 140,703 147,733 157,767 162,782 167,795 172,806 177,815 184,824 192,831 199,837 207,841 215,843 230,846', '230,846 240,852 260,856 277,857'],
    ['#ff00ff', '17.5,548 18.5,540.5 121,540.5 127,546 131,552 134,558 138,570 142,585 150,617 158,660 167,697 178,743 185,764 192,783 199,801 207,815 217,828 230,838 242,843', '242,843 260,847 277,853 293,856 317,857.5 728,857.5'],
    ['#ff0000', '17.5,611 18.5,604.5 156,604.5 160,607 164,611 170,622 174,631 177,641 182,660 192,697 203,738 215,775 221,789 227,801 235,815', '235,815 248,831 262,841 280,846 297,849 317,855 335,857'],
    ['#0000ff', '17.5,524 18.5,504.5 92,504.5 101,507 112,512 122,519 135,529 148,542 157,553 175,577 193,603 213,635', '213,635 230,662 262,707 295,748 313,767 337,787 364,805 381,814 400,822 433,832 470,839 507,843 563,847 593,852 637,855 707,857'],
    ['#00ffff', '18.5,710 18.5,637.5 235,637.5', '235,637.5 262,637.5 270,642 276,651 280,660 295,703 303,728 310,750 320,778 330,800 347,825 364,840 383,848 407,851 423,855 442,857'],
    ['#ffff00', '18.5,771 18.5,652.5 212,652.5', '212,652.5 265,652.5 280,655 300,662 330,679 366,706 400,738 435,768 470,793 503,812 538,827 573,836 608,842 643,847 677,849 723,851']
];

function drawGraph() {
    let out = '<g stroke="#848284" shape-rendering="crispEdges">';
    for (let v = 0; v <= 580; v += 20) {
        const y = 857.5 - v / 20 * 14;
        out += `<path d="M17 ${y}H728"/>`;
    }
    for (let km = 10; km <= 200; km += 10) {
        const x = Math.floor(17.5 + km * 3.476) + 0.5;
        out += `<path d="M${x} 441V871"/>`;
    }
    out += '<path d="M101.500 440V857" stroke-dasharray="4 3"/></g>';
    out += '<path d="M17 857.500H275" stroke="#000" shape-rendering="crispEdges"/>';

    curves.forEach(([colour, solid, dashed]) => {
        out += `<g fill="none" stroke="${colour}" shape-rendering="crispEdges">
            <polyline points="${solid}"/><polyline points="${dashed}" stroke-dasharray="4 3"/></g>`;
    });

    for (let v = 0; v <= 580; v += 20) {
        out += `<text x="18" y="${855 - v / 20 * 14}">${v}</text>`;
    }
    for (let km = 0; km <= 200; km += 10) {
        out += `<text x="${Math.floor(19 + km * 3.476)}" y="868">${km}</text>`;
    }
    [['501 DPS', 516], ['499 DPS', 519], ['452 DPS', 551], ['362 DPS', 615], ['315 DPS', 648], ['293 DPS', 663], ['24km', 855]]
        .forEach(([text, y]) => { out += `<text x="103" y="${y}">${text}</text>`; });

    [['Абс - мультики', 41, 473], ['Абс - рентген', 37, 536], ['Слейп - ЕМП', 153, 546], ['Абс - стандарт', 36, 602],
     ['Абс - аврора', 220, 631], ['Слейп - тремор', 303, 664]]
        .forEach(([text, x, y]) => { out += `<text class="caption" x="${x}" y="${y}">${text}</text>`; });

    document.getElementById('graph').innerHTML = out;
}

drawGraph();
```
